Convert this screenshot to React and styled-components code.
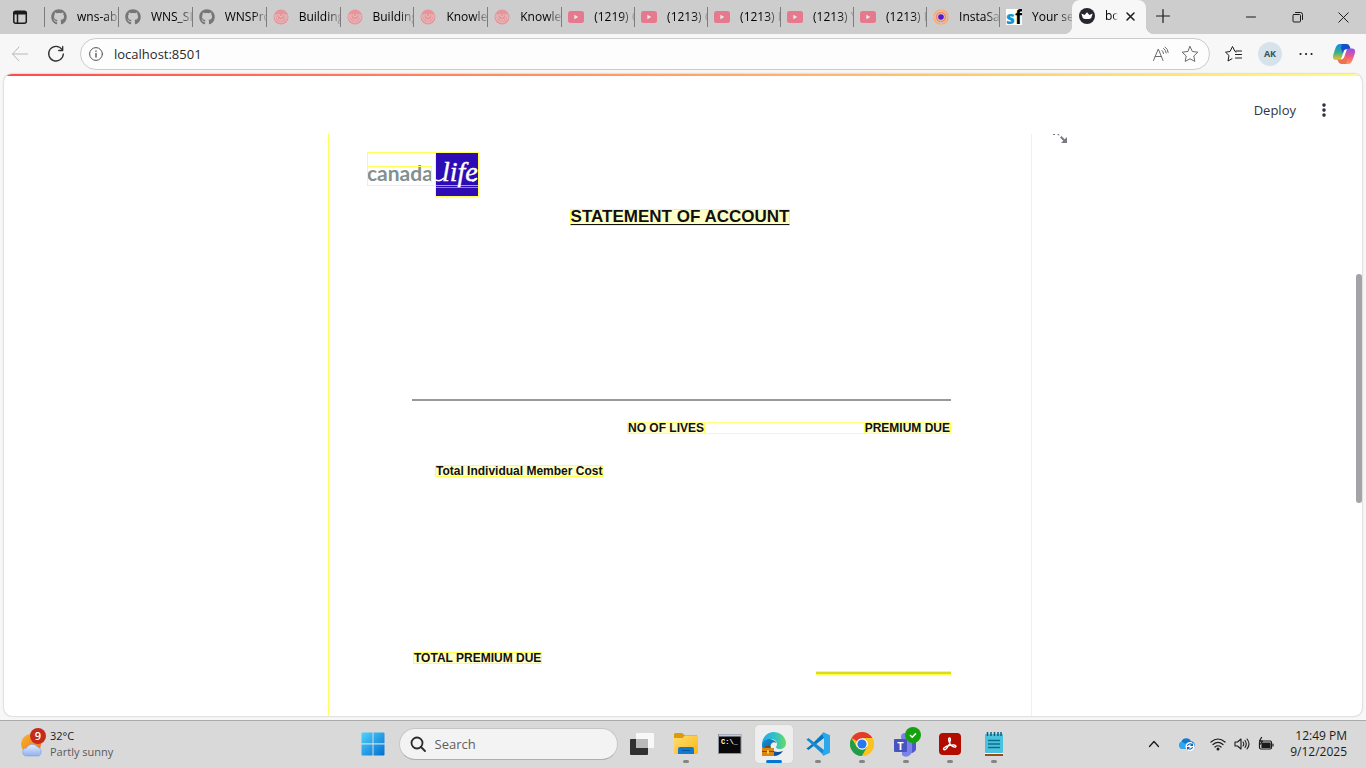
import React from "react";
import styled, { createGlobalStyle, css } from "styled-components";
import { FaGithub } from "react-icons/fa";

const ui = `"Open Sans", "Noto Sans", sans-serif`;

const Global = createGlobalStyle`
  *, *::before, *::after { box-sizing: border-box; }
  html, body { margin: 0; height: 100%; overflow: hidden; }
  body { font-family: ${ui}; font-size: 12px; color: #1b1b1b; background: #f7f7f7; }
  #root { height: 100%; }
  button, input { font: inherit; color: inherit; border: 0; padding: 0; margin: 0; background: none; outline: none; }
  svg { display: block; flex: none; }
  h1, p { margin: 0; }
`;

const Desktop = styled.div`
  height: 100vh;
  display: flex;
  flex-direction: column;
`;

/* ---------- tab strip ---------- */

const TabStrip = styled.nav`
  display: flex;
  height: 34px;
  flex: none;
  background: #cdcdcd;
`;

const Workspace = styled.button`
  width: 44px;
  padding-left: 12px;
  display: flex;
  align-items: center;
`;

const TabList = styled.div`
  flex: 1;
  min-width: 0;
  display: flex;
`;

const Tab = styled.button`
  flex: ${(p) => p.$grow} 1 0;
  min-width: 0;
  height: 20px;
  margin-top: 7px;
  padding-left: 6px;
  display: flex;
  align-items: center;
  gap: 10px;
  border-left: 1px solid #7d7d7d;
`;

const TabLabel = styled.span`
  flex: 1;
  min-width: 0;
  text-align: left;
  white-space: nowrap;
  overflow: hidden;
  line-height: 18px;
  padding-bottom: 1px;
  color: #000;
  mask-image: linear-gradient(90deg, #000 calc(100% - 14px), #0003 100%);
`;

const Muted = styled.span`
  opacity: ${(p) => (p.$on ? 0.5 : 1)};
`;

const ActiveTab = styled.div`
  position: relative;
  width: 74px;
  padding: 0 9px 2px 7px;
  display: flex;
  align-items: center;
  background: #f7f7f7;
  border-radius: 8px 8px 0 0;
  &::before, &::after {
    content: "";
    position: absolute;
    bottom: 0;
    width: 8px;
    height: 8px;
  }
  &::before { left: -8px; background: radial-gradient(circle at 0 0, transparent 8px, #f7f7f7 8px); }
  &::after { right: -8px; background: radial-gradient(circle at 100% 0, transparent 8px, #f7f7f7 8px); }
`;

const ActiveLabel = styled(TabLabel)`
  flex: none;
  width: 13px;
  margin: 0 6px 0 10px;
  mask-image: linear-gradient(90deg, #000 8px, transparent 100%);
`;

const NewTab = styled.button`
  width: 34px;
  padding-bottom: 2px;
  display: grid;
  place-items: center;
`;

const WindowButtons = styled.div`
  display: flex;
  width: 186px;
  padding-left: 48px;
`;

const WindowButton = styled.button`
  width: 46px;
  display: grid;
  place-items: center;
`;

/* ---------- toolbar ---------- */

const Toolbar = styled.header`
  display: flex;
  align-items: center;
  height: 40px;
  flex: none;
  padding: 0 2px 0 10px;
  background: #f7f7f7;
`;

const IconButton = styled.button`
  width: ${(p) => p.$w || 36}px;
  height: 32px;
  flex: none;
  display: grid;
  place-items: center;
`;

const AddressBar = styled.label`
  flex: 1;
  height: 32px;
  min-width: 0;
  margin: 0 6px 0 -2px;
  padding: 0 10px 0 8px;
  display: flex;
  align-items: center;
  gap: 10px;
  background: #fdfdfd;
  border: 1px solid #cbcbcb;
  border-radius: 16px;
`;

const AddressInput = styled.input`
  flex: 1;
  min-width: 0;
  padding-left: 1px;
  font-size: 13px;
  line-height: 20px;
  color: #2a2a2a;
`;

const Avatar = styled.span`
  width: 24px;
  height: 24px;
  border-radius: 50%;
  background: #d6e3ea;
  color: #36535f;
  font-size: 9px;
  line-height: 24px;
  font-weight: 700;
  text-align: center;
`;

/* ---------- page frame ---------- */

const Frame = styled.div`
  flex: 1;
  min-height: 0;
  margin: 0 4px 4px;
  display: flex;
  flex-direction: column;
  background: #fff;
  border-radius: 8px;
  overflow: hidden;
  box-shadow: 0 0 2px #0005;
`;

const Decoration = styled.div`
  height: 2px;
  flex: none;
  background: linear-gradient(90deg, #ff4b4b, #fffd80);
`;

const FrameRow = styled.div`
  flex: 1;
  min-height: 0;
  display: flex;
`;

const AppColumn = styled.div`
  flex: 1;
  min-width: 0;
  display: flex;
  flex-direction: column;
`;

const AppHeader = styled.div`
  height: 58px;
  flex: none;
  padding: 10px 22px 0 0;
  display: flex;
  justify-content: flex-end;
  align-items: center;
  gap: 18px;
`;

const Deploy = styled.button`
  font-size: 13px;
  line-height: 20px;
  color: #31333f;
`;

const MenuButton = styled.button`
  width: 20px;
  height: 20px;
  display: grid;
  place-items: center;
`;

const Scrollbar = styled.div`
  width: 6px;
  display: grid;
  grid-template-rows: 198fr 229fr 213fr;
`;

const Thumb = styled.div`
  grid-row: 2;
  background: #a3a3a8;
  border-radius: 3px;
`;

const Main = styled.main`
  flex: 1;
  min-height: 0;
  overflow: hidden;
  display: grid;
  grid-template-columns: 1fr minmax(0, 704px) 1fr;
`;

const Sheet = styled.article`
  grid-column: 2;
  border-left: 1px solid #ffff5c;
  border-right: 1px solid #f1f1e4;
  font-family: "Liberation Sans", Arial, sans-serif;
  color: #111;
`;

const Expand = styled.button`
  justify-self: start;
  align-self: start;
  margin-left: 20px;
`;

const LogoRow = styled.div`
  padding: 17px 0 0 37px;
`;

const Title = styled.h1`
  width: fit-content;
  margin: 12px auto 0;
  padding: 0 0 1px;
  font-size: 17px;
  line-height: 14px;
  text-decoration: underline;
  text-decoration-thickness: 1px;
  text-underline-offset: 2px;
  border: 1px solid #ffff4d;
  background: #ffffc8;
`;

const Statement = styled.section`
  padding: 0 80px 0 83px;
`;

const Rule = styled.hr`
  height: 2px;
  margin: 173px 0 21px;
  border: 0;
  background: #999;
`;

const Marked = styled.p`
  width: fit-content;
  font-size: 12px;
  font-weight: 700;
  line-height: 10px;
  white-space: nowrap;
  border: 1px solid #ffff4d;
  background: #ffffc8;
`;

const Columns = styled.div`
  display: flex;
  justify-content: space-between;
  margin-left: 215px;
  border: solid #ffff7a;
  border-width: 1px 0;
  ${Marked} { border-width: 0 1px; }
`;

const MemberCost = styled.div`
  padding: 31px 0 0 23px;
`;

const TotalDue = styled.div`
  padding: 175px 0 0 1px;
`;

const SumLine = styled.hr`
  width: 135px;
  height: 4px;
  margin: 7px 0 0 auto;
  border: solid #ffff3c;
  border-width: 1px 0;
  background: #dada28;
`;

/* ---------- taskbar ---------- */

const Taskbar = styled.footer`
  height: 48px;
  flex: none;
  display: grid;
  grid-template-columns: 1fr auto 1fr;
  align-items: center;
  padding-bottom: 1px;
  background: #d9d9d9;
  border-top: 1px solid #a9acaa;
`;

const Weather = styled.button`
  display: flex;
  align-items: center;
  gap: 4px;
  padding-left: 20px;
  text-align: left;
`;

const Lines = styled.span`
  display: grid;
  font-size: ${(p) => p.$size || 11}px;
  line-height: 16px;
  text-align: ${(p) => p.$align || "left"};
`;

const Soft = styled.span`
  color: #5a5a5a;
`;

const Dock = styled.div`
  display: flex;
  align-items: center;
`;

const DockButton = styled.button`
  position: relative;
  width: 38px;
  height: 38px;
  margin: 0 3px;
  display: grid;
  place-items: center;
  border-radius: 4px;
  ${(p) => p.$active && css`background: #eeeeee; box-shadow: 0 0 1px #0003;`}
  ${(p) => p.$mark && css`
    &::after {
      content: "";
      position: absolute;
      left: 50%;
      bottom: 0;
      width: ${p.$active ? 16 : 6}px;
      height: 3px;
      border-radius: 2px;
      transform: translateX(-50%);
      background: ${p.$active ? "#0078d4" : "#858585"};
    }
  `}
`;

const SearchBox = styled.label`
  width: 219px;
  height: 32px;
  margin: 0 2px 0 4px;
  padding-left: 10px;
  display: flex;
  align-items: center;
  gap: 9px;
  border-radius: 16px;
  background: #f3f3f3;
  border: 1px solid #c6c6c6;
  border-bottom-color: #adadad;
`;

const SearchInput = styled.input`
  flex: 1;
  min-width: 0;
  font-size: 13px;
  line-height: 20px;
  &::placeholder { color: #5e5e5e; opacity: 1; }
`;

const Tray = styled.div`
  justify-self: end;
  display: flex;
  align-items: center;
  padding-right: 19px;
`;

const TrayButton = styled.button`
  width: ${(p) => p.$w || 24}px;
  height: 32px;
  display: grid;
  place-items: center;
`;

const Clock = styled.button`
  margin-left: 8px;
`;

/* ---------- drawings ---------- */

const Line = ({ w = 16, h = w, box, sw = 1, color = "#1b1b1b", children }) => (
  <svg width={w} height={h} viewBox={box || `0 0 ${w} ${h}`} fill="none" stroke={color} strokeWidth={sw} strokeLinecap="round" strokeLinejoin="round" aria-hidden="true">
    {children}
  </svg>
);

const Swirl = () => (
  <svg width="16" height="16" viewBox="0 0 16 16" fill="none">
    <circle cx="8" cy="8" r="7.5" fill="#ff5f69" />
    <path d="M2.300 5.500a6 6 0 1 0 11.400 0M4.300 5a4.200 4.200 0 1 0 7.400 0M6.200 5a2 2 0 1 0 3.600 0" stroke="#ffd0d2" strokeWidth=".8" />
  </svg>
);

const Youtube = () => (
  <svg width="16" height="16" viewBox="0 0 16 16">
    <rect y="2" width="16" height="12" rx="2.5" fill="#ff2850" />
    <path d="M6.300 5.700v4.600l4-2.300z" fill="#fff" />
  </svg>
);

const Insta = () => (
  <svg width="16" height="16" viewBox="0 0 16 16" fill="none">
    <circle cx="8" cy="8" r="7" stroke="#ffa675" strokeWidth="1.6" strokeDasharray="10 1.2" />
    <circle cx="8" cy="8" r="4.5" stroke="#f58b58" strokeWidth="1.6" />
    <circle cx="8" cy="8" r="2.8" fill="#5912ce" />
  </svg>
);

const Sf = () => (
  <svg width="16" height="16" viewBox="0 0 16 16">
    <rect width="16" height="16" fill="#fff" />
    <text x="0" y="15" fontFamily="Open Sans" fontWeight="800" fontSize="17" fill="#1296d8">s</text>
    <text x="9" y="15" fontFamily="Open Sans" fontWeight="700" fontSize="19" fill="#000">f</text>
  </svg>
);

const Crown = () => (
  <svg width="16" height="16" viewBox="0 0 16 16">
    <circle cx="8" cy="8" r="8" fill="#262730" />
    <path d="M2.300 5.500 5.600 7 8 4.300 10.400 7l3.300-1.500-1.600 4.700q-4.100 1.700-8.200 0z" fill="#fff" />
  </svg>
);

const Copilot = () => (
  <svg width="24" height="22" viewBox="0 0 24 22">
    <defs>
      <linearGradient id="cpA" x1="0" y1="0" x2="0" y2="1">
        <stop offset="0" stopColor="#1687e8" /><stop offset=".5" stopColor="#30ad94" /><stop offset="1" stopColor="#f3c51c" />
      </linearGradient>
      <linearGradient id="cpB" x1="0" y1="0" x2="0" y2="1">
        <stop offset="0" stopColor="#8e51ec" /><stop offset=".5" stopColor="#ed558f" /><stop offset="1" stopColor="#ff9b55" />
      </linearGradient>
    </defs>
    <path d="M8 1h7L11 13q-1.500 4-4 4H4Q0 17 1.200 12L3.500 5Q5 1 8 1z" fill="url(#cpA)" />
    <path d="M10 1h5q2 0 3 3l.6 2.500h-3.200q-2 0-2.700 2L11.500 12 9 5z" fill="#1450c8" />
    <path d="M16 21H9l4-12q1.500-3.500 4-3.500h3q4 0 2.800 5L20.500 17Q19 21 16 21z" fill="url(#cpB)" />
    <path d="M14 21H9q-2 0-3-3l-.5-1.500h2.700q2 0 2.800-2.500l1.500-4L15 17z" fill="#f0704f" />
    <path d="M12 7.500q1-1.500 3-1.500l-3 8.500q-1 2-3 2z" fill="#fff" />
  </svg>
);

const Logo = () => (
  <svg width="114" height="46" viewBox="0 0 114 46" role="img" aria-label="canada life">
    <rect x="70" y="2" width="42" height="43" fill="#2d0bb5" />
    <text x="1" y="30" fontFamily="Lato" fontSize="21" fontWeight="700" fill="#83908f">canada</text>
    <g fill="none" stroke="#ffff55">
      <rect x="1.500" y="1.500" width="111" height="33" />
      <path d="M1.500 15.500h64v16" />
      <rect x="69.500" y="1.500" width="43" height="44" />
      <path d="M70 34.500h42" stroke="#b9b43f" />
      <path d="M70 36.500h42" stroke="#8f83d8" />
    </g>
    <text x="76" y="30" fontFamily="Liberation Serif" fontStyle="italic" fontSize="28" fill="#fff" stroke="#fff" strokeWidth=".4">life</text>
    <path d="M70 29q4 2 8-2M106 30q3 0 5-3" fill="none" stroke="#fff" strokeWidth="1.500" />
  </svg>
);

const WeatherIcon = () => (
  <svg width="26" height="32" viewBox="0 0 26 32">
    <defs>
      <linearGradient id="sun" x1="0" y1="0" x2="1" y2="1"><stop stopColor="#f6b72d" /><stop offset="1" stopColor="#ef6a1c" /></linearGradient>
      <linearGradient id="cloud" x1="0" y1="0" x2="0" y2="1"><stop stopColor="#e1edff" /><stop offset="1" stopColor="#8fb0ee" /></linearGradient>
    </defs>
    <circle cx="11" cy="16" r="10" fill="url(#sun)" />
    <path d="M7 28a4 4 0 0 1-.5-8 6.500 6.500 0 0 1 11-1 5 5 0 0 1 1.500 9z" fill="url(#cloud)" stroke="#86a5e4" strokeWidth=".7" />
    <circle cx="18" cy="8" r="8" fill="#c42b1c" />
    <text x="18" y="12" textAnchor="middle" fontFamily="Open Sans" fontSize="11" fontWeight="600" fill="#fff">9</text>
  </svg>
);

const Windows = () => (
  <svg width="24" height="24" viewBox="0 0 24 24">
    <defs><linearGradient id="win" x1="0" y1="0" x2="1" y2="1"><stop stopColor="#4fd2ff" /><stop offset="1" stopColor="#006fd0" /></linearGradient></defs>
    <path fill="url(#win)" d="M1.500.5h10v10.800H.5V1.500q0-1 1-1zm11 0h10q1 0 1 1v9.800h-11zM.5 12.500h11v11h-10q-1 0-1-1zm12 0h11v10q0 1-1 1h-10z" />
  </svg>
);

const TaskView = () => (
  <svg width="24" height="24" viewBox="0 0 24 24">
    <rect y="7" width="18" height="16" rx="1" fill="#303030" />
    <rect x="6" y="1" width="18" height="15" rx="1" fill="#f8f8f8" />
    <path d="M6 7h12v9H7q-1 0-1-1z" fill="#b9b9b9" />
  </svg>
);

const Folder = () => (
  <svg width="24" height="24" viewBox="0 0 24 24">
    <defs><linearGradient id="fold" x1="0" y1="0" x2="1" y2="1"><stop stopColor="#ffdc72" /><stop offset="1" stopColor="#fbb813" /></linearGradient></defs>
    <path d="M0 2.500Q0 1 1.500 1H8l2.500 2H23v6H0z" fill="#dc9b0b" />
    <path d="M0 6h8.500l2.500-2.500h11.500Q24 3.500 24 5v15.500q0 1.500-1.500 1.500h-21Q0 22 0 20.500z" fill="url(#fold)" />
    <path d="M4 22v-5q0-2 2-2h12q2 0 2 2v5z" fill="#1279cf" /><path d="M8 18.500h8" stroke="#0756a4" />
  </svg>
);

const Cmd = () => (
  <svg width="24" height="20" viewBox="0 0 24 20">
    <rect x=".5" y=".5" width="22.500" height="19" fill="#080808" stroke="#87929e" />
    <path d="M1 1.500h22" stroke="#c4cdd6" strokeWidth="2" />
    <text x="3" y="10" fontFamily="Liberation Mono" fontSize="7" fontWeight="700" fill="#fff">C:\_</text>
  </svg>
);

const Edge = () => (
  <svg width="26" height="26" viewBox="0 0 26 26">
    <defs>
      <linearGradient id="edgeA"><stop stopColor="#25a9e8" /><stop offset=".55" stopColor="#2fc2c8" /><stop offset="1" stopColor="#6bdb5a" /></linearGradient>
      <linearGradient id="edgeB" x1="0" y1="0" x2="1" y2="1"><stop stopColor="#1393d8" /><stop offset="1" stopColor="#0b3f91" /></linearGradient>
    </defs>
    <path d="M1 14A12 12 0 0 1 25 12c0 4-3 6-6.500 6-2 0-3.500-.8-3.500-1.800 0-.8 1-1.200 1-3.200 0-3-3-5-6.500-5S2 10 1 14z" fill="url(#edgeA)" />
    <path d="M1 14c0-4 4-6.500 8-6 3 .4 5.500 2 6.500 4-3-2-6 0-6 3.500 0 4 5 7 12.500 4.500C20 23.500 16 25 13 25 6 25 1 20 1 14z" fill="url(#edgeB)" />
    <rect x="1" y="17" width="12" height="8" fill="#d98712" /><path d="M1 20.500h12" stroke="#7e4b09" /><path d="M5 17v-1.500h4V17" fill="none" stroke="#77460a" /><rect x="6" y="19.500" width="2" height="3" fill="#ffd35c" />
  </svg>
);

const Code = () => (
  <svg width="24" height="24" viewBox="0 0 24 24">
    <path d="m17.500.5-12 12-3 2.500L.3 16.500 2.500 18 18 6z" fill="#0878be" />
    <path d="M.4 7.500 2.500 6 18 18v5.500l-12-11z" fill="#168bd2" />
    <path d="M17.500.3 24 3.200v17.600l-6.500 2.900L16 22l2-4V6l-2-4z" fill="#29a8ee" />
  </svg>
);

const Chrome = () => (
  <svg width="24" height="24" viewBox="0 0 24 24">
    <circle cx="12" cy="12" r="12" fill="#fcc31e" />
    <path d="M12 12 1.600 6A12 12 0 0 1 22.400 6H12z" fill="#e33b2e" />
    <path d="M1.600 6A12 12 0 0 0 12 24l5.200-9L12 12 6.800 15z" fill="#229b4a" />
    <path d="M22.400 6H12v6l5.200 3L12 24A12 12 0 0 0 22.400 6z" fill="#fcc31e" />
    <circle cx="12" cy="12" r="5.800" fill="#fff" /><circle cx="12" cy="12" r="4.600" fill="#2777ef" />
  </svg>
);

const Teams = () => (
  <svg width="30" height="34" viewBox="0 0 30 34">
    <circle cx="14" cy="10" r="4" fill="#7b83eb" />
    <path d="M17 13h8v9a5 5 0 0 1-8 3z" fill="#5059c9" />
    <path d="M11 14h10v9a6 6 0 0 1-10 5z" fill="#7b83eb" />
    <rect x="3" y="12" width="13" height="13" rx="1" fill="#4b53bc" />
    <text x="9.500" y="23" textAnchor="middle" fontFamily="Open Sans" fontSize="11" fontWeight="700" fill="#fff">T</text>
    <circle cx="22" cy="8" r="8" fill="#13a10e" /><path d="m19 8 2.200 2.200L25 6.400" fill="none" stroke="#fff" strokeWidth="1.500" />
  </svg>
);

const Acrobat = () => (
  <svg width="22" height="22" viewBox="0 0 22 22">
    <rect width="22" height="22" rx="4" fill="#b30b00" />
    <path d="M5 16.500c-1.500-.5.500-3 5-4 4-1 7-.7 7 .8s-3 .8-5-1C9.500 9 9 5 10.500 5s1 3.500-1 7.500C8 15.500 6 17.300 5 16.500z" fill="none" stroke="#fff" strokeWidth="1.400" />
  </svg>
);

const Notepad = () => (
  <svg width="20" height="26" viewBox="0 0 20 26">
    <rect x="1" y="3" width="18" height="19" rx="1" fill="#48c2df" />
    <path d="M3.500 1v4M7 1v4M10.500 1v4M14 1v4M17 1v4" stroke="#175b78" strokeWidth="1.500" />
    <path d="M4 9.500h12M4 13h12M4 16.500h12" stroke="#0f6d8c" strokeWidth="1.500" />
    <path d="M1 22h18v1H1z" fill="#fff" /><path d="M1 23h18v2H1z" fill="#9c4a16" />
  </svg>
);

const OneDrive = () => (
  <svg width="17" height="14" viewBox="0 0 17 14">
    <path d="M4 12a4 4 0 0 1-.5-7.500A5.200 5.200 0 0 1 13 4.200 4 4 0 0 1 14 12z" fill="#1278d2" />
    <path d="M4 12a4 4 0 0 1-.5-7.500L11 9v3z" fill="#31a7ef" />
    <circle cx="12" cy="9.500" r="4.500" fill="#fff" />
    <path d="M9.500 9a2.600 2.600 0 0 1 4.700-1M14.500 10a2.600 2.600 0 0 1-4.700 1M14.500 6.500v2h-2M9.500 12.500v-2h2" fill="none" stroke="#1262b8" strokeWidth="1.100" />
  </svg>
);

const git = <FaGithub size={16} color="#222" />;
const tabs = [
  [git, "wns-abl", true], [git, "WNS_SI", true], [git, "WNSPro", true],
  [<Swirl />, "Building", true], [<Swirl />, "Building", true],
  [<Swirl />, "Knowled", true], [<Swirl />, "Knowled", true],
  [<Youtube />, "(1219) C", true], [<Youtube />, "(1213) C", true], [<Youtube />, "(1213) I", true],
  [<Youtube />, "(1213) Y", true], [<Youtube />, "(1213) F", true],
  [<Insta />, "InstaSaf", false], [<Sf />, "Your ses", false],
];

const dock = [
  ["Task View", <TaskView />], ["File Explorer", <Folder />, true], ["Command Prompt", <Cmd />],
  ["Edge", <Edge />, true, true], ["Visual Studio Code", <Code />, true], ["Chrome", <Chrome />, true],
  ["Teams", <Teams />, true], ["Acrobat", <Acrobat />, true], ["Notepad", <Notepad />, true],
];

export default function App() {
  return (
    <Desktop>
      <Global />
      <TabStrip aria-label="Tabs">
        <Workspace aria-label="Tab actions">
          <Line sw={1.5}><rect x="1.800" y="2.300" width="12.500" height="12" rx="2" /><path d="M2.500 4h11" strokeWidth="3" /><path d="M5.500 5v9" /></Line>
        </Workspace>
        <TabList>
          {tabs.map(([icon, label, muted], i) => (
            <Tab key={i} $grow={i < 7 ? 74 : 73}><Muted $on={muted}>{icon}</Muted><TabLabel>{label}</TabLabel></Tab>
          ))}
        </TabList>
        <ActiveTab>
          <Crown />
          <ActiveLabel>bot</ActiveLabel>
          <button aria-label="Close tab"><Line w={13} sw={1.5}><path d="m3 3 7 7M10 3l-7 7" /></Line></button>
        </ActiveTab>
        <NewTab aria-label="New tab"><Line sw={1.2}><path d="M8 1.500v13M1.500 8h13" /></Line></NewTab>
        <WindowButtons>
          <WindowButton aria-label="Minimize"><Line w={10}><path d="M.5 5h9" /></Line></WindowButton>
          <WindowButton aria-label="Restore"><Line w={11}><rect x="1" y="2.500" width="7.500" height="7.500" rx="1" /><path d="M3.500.5h5q2 0 2 2v5" /></Line></WindowButton>
          <WindowButton aria-label="Close"><Line w={11}><path d="m.8.8 9.400 9.400M10.200.8.8 10.200" /></Line></WindowButton>
        </WindowButtons>
      </TabStrip>

      <Toolbar>
        <IconButton $w={20} aria-label="Back"><Line w={18} color="#b8b8b8"><path d="M16.500 9h-15M8 2 1.500 9 8 16" /></Line></IconButton>
        <IconButton $w={52} aria-label="Refresh"><Line w={18} sw={1.3} color="#303030"><path d="M15 4.500A7.300 7.300 0 1 0 16.300 9M15.700 1.500v4h-4" /></Line></IconButton>
        <AddressBar>
          <Line w={14} color="#555"><circle cx="7" cy="7" r="6.400" /><path d="M7 6.500V10M7 4v.2" strokeWidth="1.400" /></Line>
          <AddressInput aria-label="Address" defaultValue="localhost:8501" />
          <Line w={17} color="#6a6a6a"><path d="M1.500 14.500 6.300 3l4.700 11.500M3.200 10.500h6.200M10 4.500q1.300 1 1.500 3M11.500 2.500q2.500 1.500 2.700 4.500M13 1q3 2 3.200 5.500" /></Line>
          <Line w={20} h={18} color="#6a6a6a"><path d="m10 1.500 2.400 5 5.400.7-4 3.800 1 5.400-4.800-2.600-4.800 2.600 1-5.400-4-3.800 5.400-.7z" transform="translate(1)" /></Line>
        </AddressBar>
        <IconButton aria-label="Favorites"><Line w={18}><path d="M11 7 10 6.500 7.500 1.500 5 6.500l-4.500.7L4 10.500l-1 5.500 4-2.300M11 6h5.500M10.500 9.500h6M10.500 13h6" /></Line></IconButton>
        <IconButton aria-label="Profile"><Avatar>AK</Avatar></IconButton>
        <IconButton aria-label="Settings and more"><Line sw={2}><path d="M2.500 8h.1M8 8h.1M13.500 8h.1" /></Line></IconButton>
        <IconButton $w={40} aria-label="Copilot"><Copilot /></IconButton>
      </Toolbar>

      <Frame>
        <Decoration />
        <FrameRow>
          <AppColumn>
            <AppHeader>
              <Deploy>Deploy</Deploy>
              <MenuButton aria-label="Main menu"><Line color="#31333f" sw={3.600}><path d="M8 3v.1M8 8v.1M8 13v.1" /></Line></MenuButton>
            </AppHeader>
            <Main>
              <Sheet>
                <LogoRow><Logo /></LogoRow>
                <Title>STATEMENT OF ACCOUNT</Title>
                <Statement>
                  <Rule />
                  <Columns><Marked>NO OF LIVES</Marked><Marked>PREMIUM DUE</Marked></Columns>
                  <MemberCost><Marked>Total Individual Member Cost</Marked></MemberCost>
                  <TotalDue><Marked>TOTAL PREMIUM DUE</Marked></TotalDue>
                  <SumLine />
                </Statement>
              </Sheet>
              <Expand aria-label="View fullscreen">
                <svg width="16" height="10" viewBox="0 0 16 10"><path d="M1 0h2v1H1zM5 0h2L7.500 2zM15 3v6H9l2.300-2.300L8 3.500 9.500 2l3.200 3.300z" fill="#7a7b82" /></svg>
              </Expand>
            </Main>
          </AppColumn>
          <Scrollbar><Thumb /></Scrollbar>
        </FrameRow>
      </Frame>

      <Taskbar>
        <Weather><WeatherIcon /><Lines><span>32°C</span><Soft>Partly sunny</Soft></Lines></Weather>
        <Dock>
          <DockButton aria-label="Start"><Windows /></DockButton>
          <SearchBox>
            <Line sw={1.800} color="#2a2a2a"><circle cx="7" cy="7" r="5.500" /><path d="m11 11 4 4" /></Line>
            <SearchInput type="text" placeholder="Search" aria-label="Search" />
          </SearchBox>
          {dock.map(([name, icon, mark, active]) => (
            <DockButton key={name} aria-label={name} $mark={mark} $active={active}>{icon}</DockButton>
          ))}
        </Dock>
        <Tray>
          <TrayButton aria-label="Hidden icons" $w={32}><Line w={12} sw={1.300}><path d="m1.500 8.500 4.500-5 4.500 5" /></Line></TrayButton>
          <TrayButton aria-label="OneDrive" $w={32}><OneDrive /></TrayButton>
          <TrayButton aria-label="Network" $w={32}><Line sw={1.200}><path d="M1 6q7-6 14 0M3 8.500q5-4.300 10 0M5 11q3-2.500 6 0" /><circle cx="8" cy="13" r=".9" fill="#1b1b1b" /></Line></TrayButton>
          <TrayButton aria-label="Volume" $w={16}><Line sw={1.100}><path d="M1 6h2.500L7 3v10l-3.500-3H1zM9 6q1.500 2 0 4M11 4.500q2.500 3.500 0 7M13 3q4 5 0 10" /></Line></TrayButton>
          <TrayButton aria-label="Battery" $w={32}><Line sw={1.200}><rect x="1.500" y="5" width="12" height="8" rx="1.500" /><rect x="4" y="7" width="8" height="4.500" fill="#1b1b1b" /><path d="M15 8v2M3.500 1.500 1.500 5h3L2.500 8" /></Line></TrayButton>
          <Clock><Lines $size={12} $align="right"><span>12:49 PM</span><span>9/12/2025</span></Lines></Clock>
        </Tray>
      </Taskbar>
    </Desktop>
  );
}
